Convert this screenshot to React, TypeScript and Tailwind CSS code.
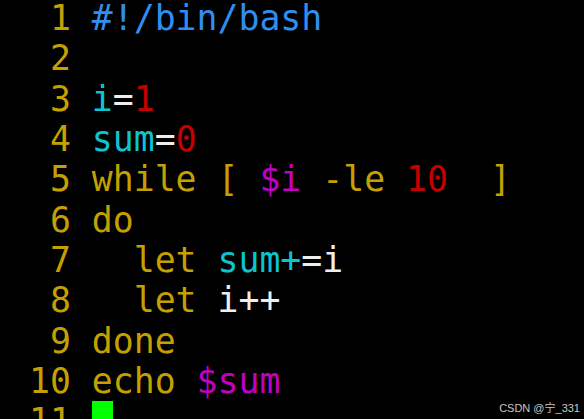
const Y = 'text-[#c4a000]';
const B = 'text-[#2f8ff0]';
const C = 'text-[#0cc4d2]';
const R = 'text-[#c40000]';
const M = 'text-[#c000c4]';
const W = 'text-[#eeeeee]';

type Seg = [string, string];

const lines: Seg[][] = [
  [[B, '#!/bin/bash']],
  [],
  [[C, 'i'], [W, '='], [R, '1']],
  [[C, 'sum'], [W, '='], [R, '0']],
  [[Y, 'while [ '], [M, '$i'], [Y, ' -le '], [R, '10'], [Y, '  ]']],
  [[Y, 'do']],
  [[Y, '  let '], [C, 'sum+'], [W, '=i']],
  [[Y, '  let '], [W, 'i++']],
  [[Y, 'done']],
  [[Y, 'echo '], [M, '$sum']],
];

export default function App() {
  return (
    <div className="relative w-[584px] h-[419px] overflow-hidden bg-black">
      <div className="pl-[8px] -mt-[2px] font-['DejaVu_Sans_Mono',monospace] text-[34.8px] leading-[40.33px] whitespace-pre">
        {lines.map((segs, i) => (
          <div key={i} className="flex">
            <span className={Y}>{String(i + 1).padStart(3, ' ') + ' '}</span>
            {segs.map(([cls, text], j) => (
              <span key={j} className={cls}>
                {text}
              </span>
            ))}
          </div>
        ))}
        <div className="flex">
          <span className={Y}>{' 11 '}</span>
          <span className="bg-[#00ff00] w-[21px] h-[40px]"></span>
        </div>
      </div>
      <div className="absolute right-[4px] bottom-[5px] font-['Liberation_Sans','Noto_Sans_CJK_SC',sans-serif] text-[11px] leading-none text-[#c8c8c8]">
        CSDN @宁_331
      </div>
    </div>
  );
}
